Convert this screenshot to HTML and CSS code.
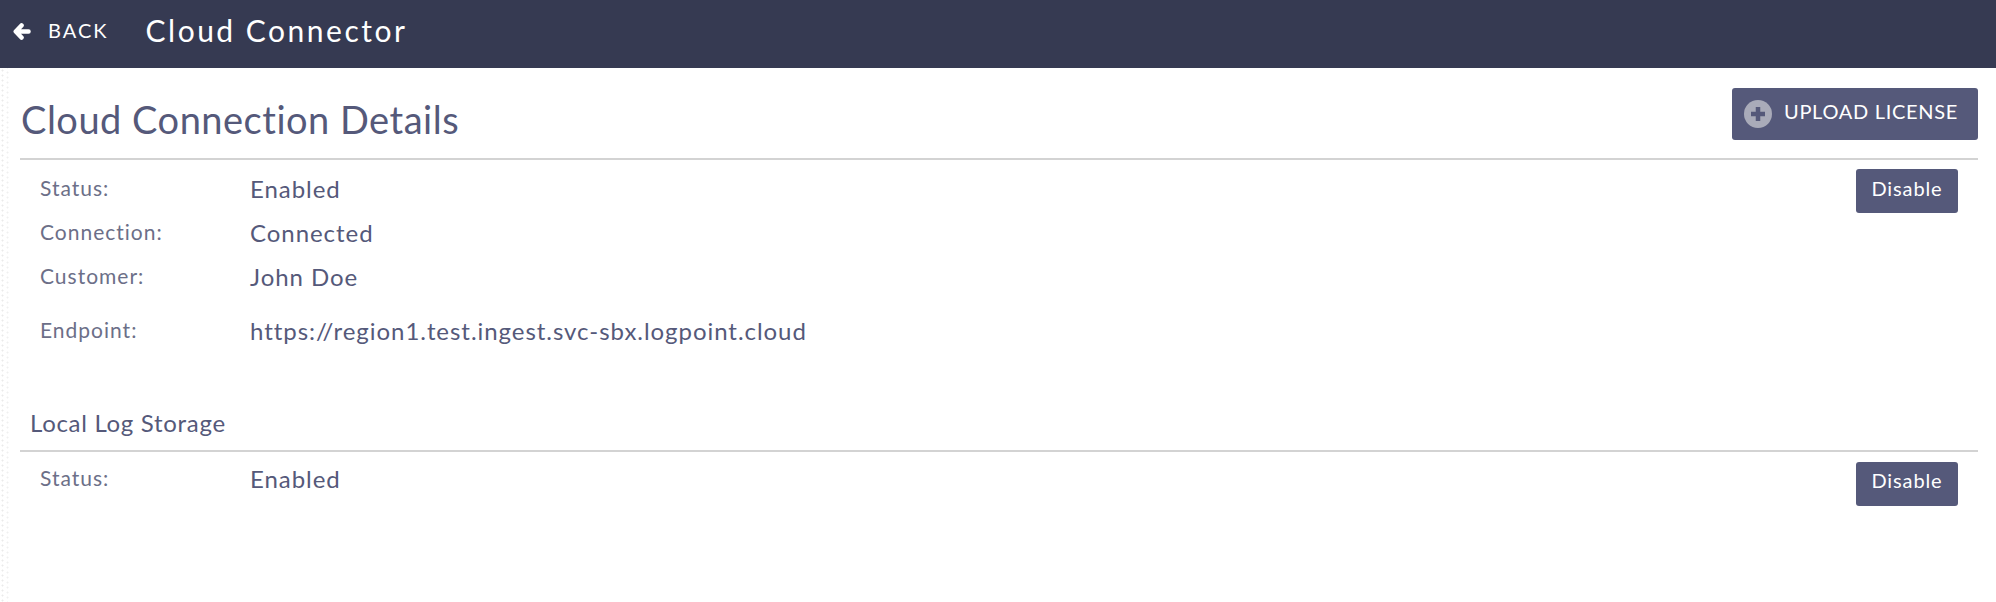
FILE: index.html

```html
<!DOCTYPE html>
<html lang="en">
<head>
    <meta charset="UTF-8">
    <meta name="viewport" content="width=device-width, initial-scale=1.0">
    <title>Cloud Connector</title>
    <link rel="stylesheet" href="styles.css">
</head>
<body>
    <header class="topbar">
        <a class="back-link" href="#">
            <svg class="back-icon" viewBox="0 0 18 17" width="18" height="17">
                <path d="M8.500 2.500 2.800 8.500l5.700 6M4 8.500h11.500" fill="none" stroke="#fff" stroke-width="4.600" stroke-linecap="round" stroke-linejoin="round"/>
            </svg>
            <span>BACK</span>
        </a>
        <h1 class="page-title">Cloud Connector</h1>
    </header>

    <main class="content">
        <div class="section-head">
            <h2>Cloud Connection Details</h2>
            <button class="btn btn-upload" type="button">
                <svg class="plus-icon" viewBox="0 0 28 28" width="28" height="28">
                    <circle cx="14" cy="14" r="14" fill="#a9abb9"/>
                    <path d="M14 7v14M7 14h14" stroke="#55597a" stroke-width="4.500"/>
                </svg>
                <span>UPLOAD LICENSE</span>
            </button>
        </div>

        <section class="details">
            <div class="rows">
                <div class="row"><span class="label">Status:</span><span class="value">Enabled</span></div>
                <div class="row"><span class="label">Connection:</span><span class="value">Connected</span></div>
                <div class="row"><span class="label">Customer:</span><span class="value">John Doe</span></div>
                <div class="row row-endpoint"><span class="label">Endpoint:</span><span class="value">https://region1.test.ingest.svc-sbx.logpoint.cloud</span></div>
            </div>
            <button class="btn btn-small" type="button">Disable</button>
        </section>

        <h3 class="sub-head">Local Log Storage</h3>
        <section class="details details-local">
            <div class="rows">
                <div class="row"><span class="label">Status:</span><span class="value">Enabled</span></div>
            </div>
            <button class="btn btn-small" type="button">Disable</button>
        </section>
    </main>
</body>
</html>
```

FILE: styles.css

```css
* { box-sizing: border-box; }
html, body { height: 100%; }
body {
    margin: 0;
    font-family: Lato, "Open Sans", sans-serif;
    color: #55597a;
    background: #fff;
    overflow: hidden;
}

.topbar {
    height: 68px;
    background: #363a52;
    color: #fff;
    display: flex;
    align-items: center;
    padding: 0 0 8px 13px;
}
.back-link {
    display: flex;
    align-items: center;
    color: #fff;
    text-decoration: none;
    font-size: 20px;
    letter-spacing: 2px;
}
.back-icon { margin: 2px 17px 0 0; }
.page-title {
    margin: 0 0 0 37px;
    font-size: 30px;
    font-weight: 400;
    letter-spacing: 2.500px;
}

/* faint dotted strip down the left edge */
.content {
    height: calc(100% - 68px);
    padding: 20px 18px 0 20px;
    background-image:
        radial-gradient(circle, #eaeaea 0.8px, transparent 1.2px),
        radial-gradient(circle, #f0f0f0 0.8px, transparent 1.2px);
    background-size: 5px 5px, 5px 5px;
    background-position: 0 0, 5px 2px;
    background-repeat: repeat-y;
}

.section-head {
    display: flex;
    justify-content: space-between;
    align-items: flex-start;
    height: 72px;
    border-bottom: 2px solid #d3d3d3;
}
.section-head h2 {
    margin: 8px 0 0 1px;
    font-size: 38px;
    line-height: 46px;
    font-weight: 400;
    letter-spacing: 0.500px;
}

.btn {
    background: #55597a;
    color: #fff;
    border: none;
    border-radius: 3px;
    font-family: inherit;
    cursor: pointer;
}
.btn-upload {
    width: 246px;
    height: 52px;
    display: flex;
    align-items: center;
    padding: 0 0 6px 12px;
    font-size: 20px;
    letter-spacing: 0.700px;
}
.plus-icon { margin: 6px 12px 0 0; }
.btn-small {
    width: 102px;
    height: 44px;
    font-size: 20px;
    letter-spacing: 0.900px;
    padding: 0 0 7px;
    margin: 9px 20px 0 0;
}
.details-local .btn-small { margin-top: 10px; padding-bottom: 8px; }

.details {
    display: flex;
    justify-content: space-between;
    align-items: flex-start;
}
.rows { padding: 13px 0 0 20px; }
.details-local .rows { padding-top: 11px; }
.row {
    display: flex;
    align-items: flex-start;
    height: 44px;
}
.row-endpoint { height: 44px; margin-top: 10px; }
.label {
    width: 210px;
    font-size: 21px;
    line-height: 30px;
    color: #6c6f88;
    letter-spacing: 1px;
}
.value {
    font-size: 24px;
    line-height: 32px;
    letter-spacing: 0.950px;
}

.sub-head {
    margin: 49px 0 0;
    padding: 0 0 12px 10px;
    border-bottom: 2px solid #d3d3d3;
    font-size: 24px;
    line-height: 30px;
    font-weight: 400;
    letter-spacing: 0.700px;
}
```
